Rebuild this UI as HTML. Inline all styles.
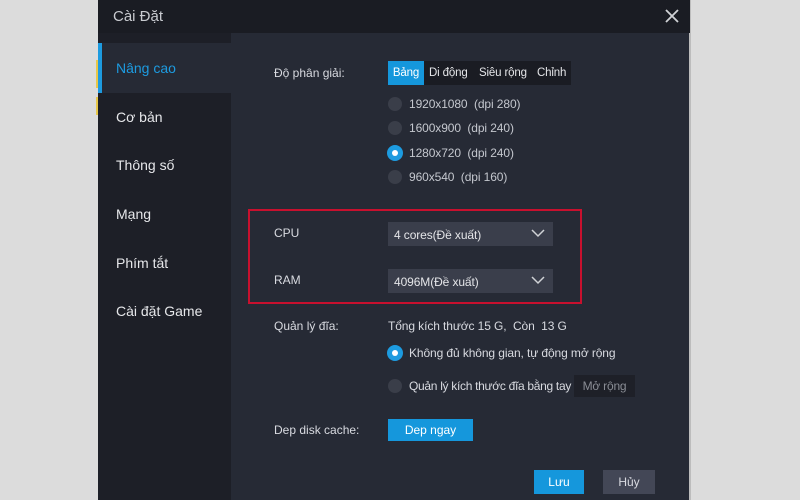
<!DOCTYPE html>
<html><head><meta charset="utf-8"><style>
*{margin:0;padding:0;box-sizing:border-box}
body{width:800px;height:500px;background:#dcdcdc;position:relative;overflow:hidden;font-family:"Liberation Sans","DejaVu Sans",sans-serif;color:#d8dae0}
.a{position:absolute;white-space:nowrap}
.dlg{left:98px;top:0;width:592px;height:500px;background:#262a35}
.title{left:98px;top:0;width:592px;height:33px;background:#1a1c23}
.side{left:98px;top:33px;width:133px;height:467px;background:#1d1f27}
.act{left:98px;top:43px;width:133px;height:50px;background:#262a35;border-left:4px solid #1d9be0}
.si{left:116px;font-size:14px;color:#e6e7ea}
.lb{left:274px;font-size:12px;color:#d8dae0}
.rad{width:14px;height:14px;border-radius:50%;background:#3a3e49}
.rad.on{background:#1d9be0;box-shadow:0 0 0 1px #1d9be0}
.rad.on::after{content:"";position:absolute;left:4px;top:4px;width:6px;height:6px;border-radius:50%;background:#fff}
.rt{left:409px;font-size:12px;color:#c4c7ce;letter-spacing:-0.1px}
.dd{left:388px;width:165px;height:24px;background:#3a3e4b;font-size:12px;color:#e4e5e8;padding:6px 0 0 6px;letter-spacing:-0.1px}
.dd svg{position:absolute;right:8px;top:7px}
.btn{background:#1597dc;color:#fff;font-size:12px;text-align:center}
.tb{font-size:11.5px;color:#e4e5e8;letter-spacing:-0.15px}
</style></head><body>
<div class="a" style="left:96px;top:60px;width:3px;height:28px;background:#e8c84a"></div>
<div class="a" style="left:96px;top:97px;width:3px;height:18px;background:#e8c84a"></div>
<div class="a dlg"></div>
<div class="a" style="left:689px;top:0;width:2px;height:500px;background:#bdbdbd"></div>
<div class="a title"></div>
<div class="a" style="left:113px;top:8px;font-size:15px;color:#c9cbd0">Cài Đặt</div>
<svg class="a" style="left:665px;top:9px" width="14" height="14"><path d="M1 1L13 13M13 1L1 13" stroke="#d0d2d6" stroke-width="1.8"/></svg>
<div class="a side"></div>
<div class="a act"></div>
<div class="a si" style="top:60px;color:#1d9be0">Nâng cao</div>
<div class="a si" style="top:109px">Cơ bản</div>
<div class="a si" style="top:157px">Thông số</div>
<div class="a si" style="top:206px">Mạng</div>
<div class="a si" style="top:255px">Phím tắt</div>
<div class="a si" style="top:303px">Cài đặt Game</div>

<div class="a lb" style="top:66px">Độ phân giải:</div>
<div class="a" style="left:388px;top:61px;width:183px;height:24px;background:#1a1c23"></div>
<div class="a btn tb" style="left:388px;top:61px;width:36px;height:24px;line-height:24px;color:#fff">Bảng</div>
<div class="a tb" style="left:429px;top:67px">Di động</div>
<div class="a tb" style="left:479px;top:67px">Siêu rộng</div>
<div class="a tb" style="left:537px;top:67px">Chỉnh</div>

<div class="a rad" style="left:388px;top:97px"></div><div class="a rt" style="top:97px">1920x1080&nbsp; (dpi 280)</div>
<div class="a rad" style="left:388px;top:121px"></div><div class="a rt" style="top:121px">1600x900&nbsp; (dpi 240)</div>
<div class="a rad on" style="left:388px;top:146px"></div><div class="a rt" style="top:146px">1280x720&nbsp; (dpi 240)</div>
<div class="a rad" style="left:388px;top:170px"></div><div class="a rt" style="top:170px">960x540&nbsp; (dpi 160)</div>

<div class="a" style="left:248px;top:209px;width:334px;height:95px;border:2px solid #c8102e"></div>
<div class="a lb" style="top:226px">CPU</div>
<div class="a dd" style="top:222px">4 cores(Đề xuất)<svg width="14" height="9"><path d="M1 1L7 7L13 1" stroke="#d0d2d6" stroke-width="1.5" fill="none"/></svg></div>
<div class="a lb" style="top:273px">RAM</div>
<div class="a dd" style="top:269px">4096M(Đề xuất)<svg width="14" height="9"><path d="M1 1L7 7L13 1" stroke="#d0d2d6" stroke-width="1.5" fill="none"/></svg></div>

<div class="a lb" style="top:319px">Quản lý đĩa:</div>
<div class="a" style="left:388px;top:319px;font-size:12px;color:#d8dae0;letter-spacing:-0.1px">Tổng kích thước 15 G,&nbsp; Còn&nbsp; 13 G</div>
<div class="a rad on" style="left:388px;top:346px"></div><div class="a rt" style="top:346px;color:#d8dae0">Không đủ không gian, tự động mở rộng</div>
<div class="a rad" style="left:388px;top:379px"></div><div class="a rt" style="top:379px;color:#d8dae0;letter-spacing:-0.3px">Quản lý kích thước đĩa bằng tay</div>
<div class="a" style="left:574px;top:375px;width:61px;height:22px;background:#1e2028;font-size:12px;color:#8a8d95;text-align:center;line-height:22px;letter-spacing:-0.2px">Mở rộng</div>

<div class="a lb" style="top:423px">Dep disk cache:</div>
<div class="a btn" style="left:388px;top:419px;width:85px;height:22px;line-height:22px">Dep ngay</div>

<div class="a btn" style="left:534px;top:470px;width:50px;height:24px;line-height:24px">Lưu</div>
<div class="a" style="left:603px;top:470px;width:52px;height:24px;line-height:24px;background:#434756;font-size:12px;color:#d8dae0;text-align:center">Hủy</div>
</body></html>
